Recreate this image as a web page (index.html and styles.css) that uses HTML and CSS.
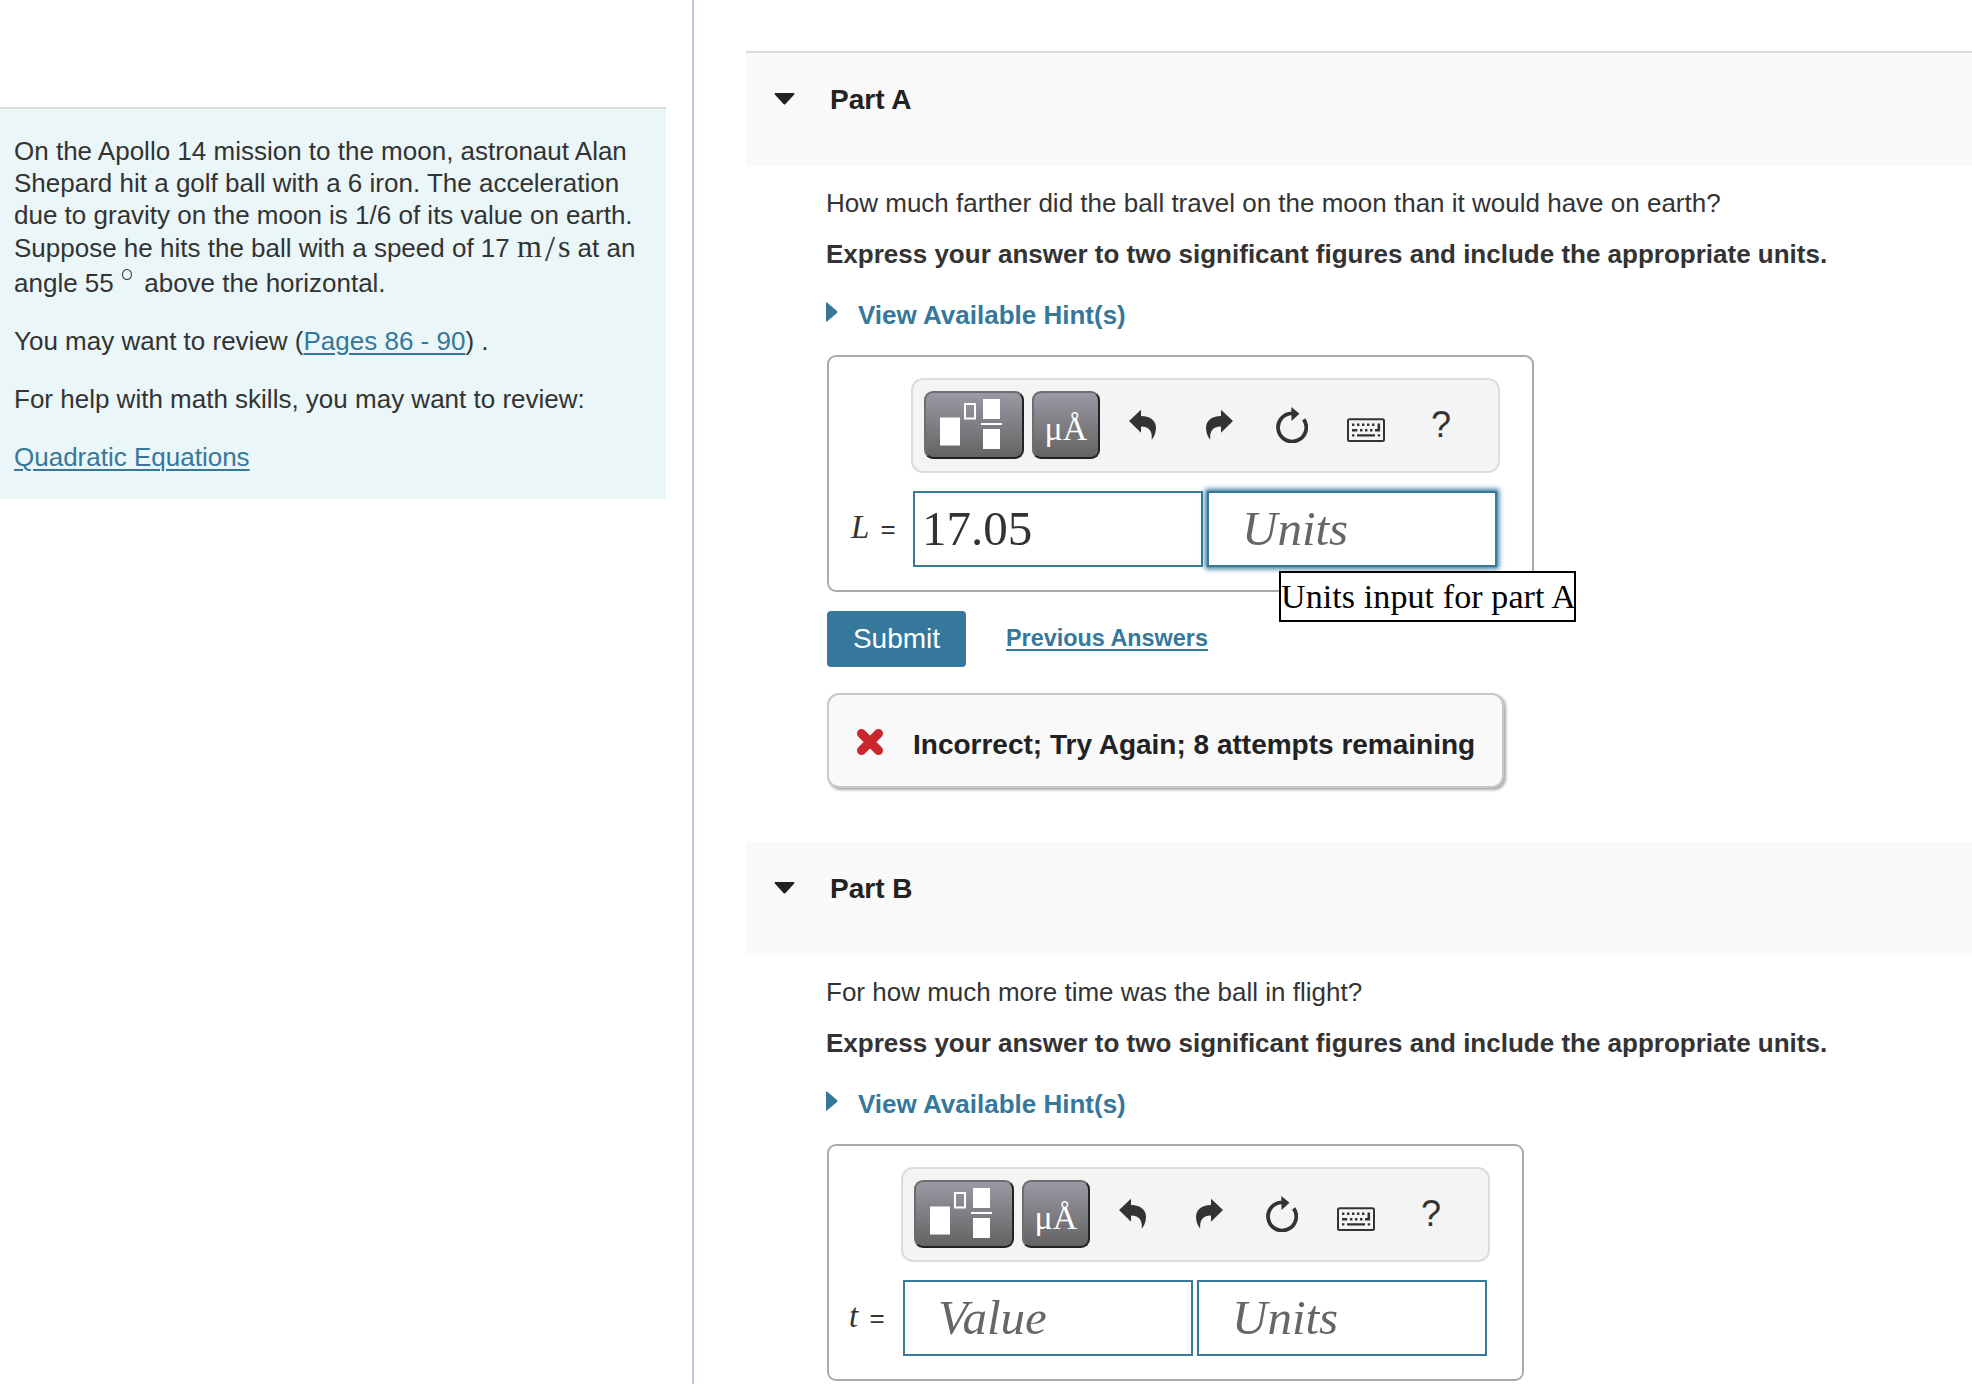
FILE: index.html
```
<!DOCTYPE html>
<html lang="en">

<head>
    <meta charset="UTF-8">
    <meta name="viewport" content="width=device-width, initial-scale=1.0">
    <title>Apollo 14 golf ball</title>
    <link rel="stylesheet" href="styles.css">
</head>

<body>
    <!-- shared toolbar icons -->
    <svg class="sprite">
        <symbol id="templates" viewBox="0 0 100 68">
            <path fill="#fff" d="M16 26.5h20v28H16zM59 8h17v20H59zM57 32h21v2H57zM59 38h17v20H59z" />
            <rect x="41" y="13" width="10" height="14.5" fill="none" stroke="#fff" stroke-width="2" />
        </symbol>
        <symbol id="undo" viewBox="0 0 27 36">
            <path d="M0 14L12 2.7V9C22 9 27 14 27 21C27 26 25 30 22.7 32.7C23.5 25 21 19.5 12 19.5V25.7Z" />
        </symbol>
        <symbol id="redo" viewBox="0 0 27 36">
            <path d="M27 14L15 2.7V9C5 9 0 14 0 21C0 26 2 30 4.3 32.7C3.5 25 6 19.5 15 19.5V25.7Z" />
        </symbol>
        <symbol id="reset" viewBox="0 0 32 36">
            <path d="M27.7 12.3A14.1 14.1 0 1 1 16 6.3" fill="none" stroke="#333" stroke-width="3.8" />
            <path d="M15.3 0L23.5 6.8L15.5 14Z" />
        </symbol>
        <symbol id="keyboard" viewBox="0 0 38 36">
            <rect x="1" y="12.2" width="36" height="21.8" rx="1.5" fill="none" stroke="#333" stroke-width="2" />
            <path d="M5 16.5h2.400v2.400H5zM10 16.5h2.400v2.400H10zM15 16.5h2.400v2.400H15zM20 16.5h2.400v2.400H20zM25 16.5h2.400v2.400H25zM30.500 16.5h2.600v8H28v-2.500H30.500zM5 22h5.300v2.500H5zM13 22h2.400v2.500H13zM18 22h2.400v2.500H18zM23 22h2.400v2.500H23zM5 27.200h2.400v2.400H5zM10 27.200h18v2.400H10zM30.700 27.200h2.400v2.400H30.700z" />
        </symbol>
    </svg>

    <!-- left: the problem -->
    <div class="side">
        <div class="problem">
            <p>
                <span class="line">On the Apollo 14 mission to the moon, astronaut Alan</span>
                <span class="line">Shepard hit a golf ball with a 6 iron. The acceleration</span>
                <span class="line">due to gravity on the moon is 1/6 of its value on earth.</span>
                <span class="line speed">Suppose he hits the ball with a speed of 17 <span class="math">m<span class="slash">/</span>s</span> at an</span>
                <span class="line angle">angle 55 <span class="deg"></span> above the horizontal.</span>
            </p>
            <p class="review">You may want to review (<a href="#">Pages 86 - 90</a>) .</p>
            <p>For help with math skills, you may want to review:</p>
            <p><a href="#">Quadratic Equations</a></p>
        </div>
    </div>

    <!-- right: the parts -->
    <div class="main">
        <div class="part first">
            <div class="head">
                <svg class="caret" width="21" height="12"><path d="M1 0H20Q21 .5 20 1.700L11.500 11Q10.500 12 9.500 11L1 1.700Q0 .5 1 0Z" /></svg>
                <h2>Part A</h2>
            </div>
            <div class="body">
                <p class="question">How much farther did the ball travel on the moon than it would have on earth?</p>
                <p class="express">Express your answer to two significant figures and include the appropriate units.</p>
                <a class="hints"><svg width="12" height="20"><path d="M0 1Q0 0 1 .5L11 9Q12 10 11 11L1 19.500Q0 20 0 19Z" /></svg>View Available Hint(s)</a>
                <div class="answer">
                    <div class="toolbar">
                        <div class="btn wide"><svg width="100" height="68"><use href="#templates" /></svg></div>
                        <div class="btn">μÅ</div>
                        <svg class="undo" width="27" height="36"><use href="#undo" /></svg>
                        <svg class="redo" width="27" height="36"><use href="#redo" /></svg>
                        <svg class="reset" width="32" height="36"><use href="#reset" /></svg>
                        <svg class="keyboard" width="38" height="36"><use href="#keyboard" /></svg>
                        <span class="help">?</span>
                    </div>
                    <div class="label"><i>L</i> =</div>
                    <div class="fields">
                        <div class="field">17.05</div>
                        <div class="field empty focus">Units<span class="tip">Units input for part A</span></div>
                    </div>
                </div>
                <div class="actions">
                    <button class="submit">Submit</button>
                    <a class="previous" href="#">Previous Answers</a>
                </div>
                <div class="feedback">
                    <svg width="28" height="28"><path d="M5.500 5.500L22.500 22.500M22.500 5.500L5.500 22.500" /></svg>
                    <span>Incorrect; Try Again; 8 attempts remaining</span>
                </div>
            </div>
        </div>

        <div class="part">
            <div class="head">
                <svg class="caret" width="21" height="12"><path d="M1 0H20Q21 .5 20 1.700L11.500 11Q10.500 12 9.500 11L1 1.700Q0 .5 1 0Z" /></svg>
                <h2>Part B</h2>
            </div>
            <div class="body">
                <p class="question">For how much more time was the ball in flight?</p>
                <p class="express">Express your answer to two significant figures and include the appropriate units.</p>
                <a class="hints"><svg width="12" height="20"><path d="M0 1Q0 0 1 .5L11 9Q12 10 11 11L1 19.500Q0 20 0 19Z" /></svg>View Available Hint(s)</a>
                <div class="answer narrow">
                    <div class="toolbar">
                        <div class="btn wide"><svg width="100" height="68"><use href="#templates" /></svg></div>
                        <div class="btn">μÅ</div>
                        <svg class="undo" width="27" height="36"><use href="#undo" /></svg>
                        <svg class="redo" width="27" height="36"><use href="#redo" /></svg>
                        <svg class="reset" width="32" height="36"><use href="#reset" /></svg>
                        <svg class="keyboard" width="38" height="36"><use href="#keyboard" /></svg>
                        <span class="help">?</span>
                    </div>
                    <div class="label"><i>t</i> =</div>
                    <div class="fields">
                        <div class="field empty">Value</div>
                        <div class="field empty">Units</div>
                    </div>
                </div>
            </div>
        </div>
    </div>
</body>

</html>
```

FILE: styles.css
```
* {
    margin: 0;
    padding: 0;
    box-sizing: border-box;
}

html {
    overflow: hidden;
}

body {
    display: flex;
    height: 1384px;
    overflow: hidden;
    background-color: #fff;
    color: #333;
    font: 26px/32px "Liberation Sans", Arial, sans-serif;
}

a {
    color: #35789b;
    text-underline-offset: 3px;
    text-decoration-thickness: 2px;
}

svg {
    display: block;
    flex: none;
    fill: #333;
}

.sprite {
    display: none;
}

/* left column */
.side {
    flex: none;
    width: 694px;
    height: 1384px;
    padding-top: 107px;
    border-right: 2px solid #bcc9dc;
}

.problem {
    width: 666px;
    height: 392px;
    padding: 26px 14px;
    border-top: 2px solid #dcdcdc;
    background-color: #eaf6f8;
    white-space: nowrap;
}

.problem p {
    margin-bottom: 26px;
}

.problem .review {
    margin-top: -2px;
}

.line {
    display: block;
    height: 32px;
}

.line.speed {
    height: 34px;
    line-height: 34px;
}

.line.angle {
    height: 36px;
    line-height: 36px;
}

.math {
    font-family: "Liberation Serif", serif;
    font-size: 32px;
    line-height: 1px;
}

.slash {
    display: inline-block;
    font-size: 36px;
    line-height: 1px;
    margin: 0 3px;
    vertical-align: -4px;
}

.deg {
    display: inline-block;
    width: 10px;
    height: 11px;
    margin: 0 5px 0 1px;
    border: 1px solid #333;
    border-radius: 50%;
    vertical-align: 12px;
}

/* right column */
.main {
    flex: 1;
    padding: 51px 0 0 52px;
}

.head {
    display: flex;
    height: 113px;
    padding-left: 28px;
    background-color: #f9f9f9;
}

.first .head {
    height: 115px;
    border-top: 2px solid #dcdcdc;
}

.caret {
    margin: 40px 35px 0 0;
    fill: #222;
}

.head h2 {
    margin-top: 31px;
    color: #222;
    font-size: 28px;
    line-height: 32px;
}

.body {
    padding: 21px 0 54px 81px;
}

.question {
    text-indent: -1px;
}

.express {
    margin-top: 19px;
    font-weight: bold;
    text-indent: -1px;
}

.hints {
    display: flex;
    margin: 29px 0 24px;
    font-weight: bold;
}

.hints svg {
    margin: 3px 20px 0 -1px;
    fill: #35789b;
}

.answer {
    display: grid;
    grid-template-columns: 82px 589px;
    grid-template-rows: 95px 76px;
    row-gap: 18px;
    width: 707px;
    height: 237px;
    padding-top: 21px;
    border: 2px solid #aaa;
    border-radius: 9px;
}

.answer.narrow {
    grid-template-columns: 72px 589px;
    width: 697px;
}

.toolbar {
    grid-column: 2;
    display: flex;
    align-items: center;
    padding: 0 0 2px 11px;
    border: 2px solid #dcdcdc;
    border-radius: 12px;
    background-color: #f4f4f4;
}

.btn {
    width: 68px;
    height: 68px;
    border: 2px solid;
    border-color: #6d6d70 #222 #222 #6d6d70;
    border-radius: 9px;
    background-image: linear-gradient(#9b99a3, #636363);
    color: #fff;
    font: 34px/72px "Liberation Serif", serif;
    text-align: center;
}

.btn.wide {
    width: 100px;
    margin-right: 8px;
}

.btn svg {
    margin: -2px;
}

.undo {
    margin-left: 29px;
}

.redo {
    margin-left: 50px;
}

.reset {
    margin-left: 43px;
}

.keyboard {
    margin-left: 39px;
}

.help {
    margin-left: 46px;
    font-size: 36px;
}

.label {
    padding: 20px 0 0 22px;
    white-space: nowrap;
}

.narrow .label {
    padding-left: 20px;
}

.label i {
    margin-right: 4px;
    font: italic 33px/32px "Liberation Serif", serif;
}

.fields {
    display: flex;
    gap: 4px;
    padding-left: 2px;
}

.field {
    position: relative;
    width: 290px;
    border: 2px solid #35789b;
    padding-left: 7px;
    font: 49px/72px "Liberation Serif", serif;
}

.field.empty {
    padding-left: 33px;
    color: #666;
    font-style: italic;
}

.field.focus {
    box-shadow: 0 0 5px 2px #35789b;
}

/* tooltip under the focused field */
.tip {
    position: absolute;
    left: 70px;
    top: 78px;
    width: 297px;
    height: 51px;
    border: 2px solid #000;
    background-color: #fff;
    color: #000;
    font: 34px/48px "Liberation Serif", serif;
    letter-spacing: 0.1px;
    white-space: nowrap;
}

.actions {
    display: flex;
    margin: 19px 0 26px;
}

.submit {
    width: 139px;
    height: 56px;
    border: 0;
    border-radius: 4px;
    background-color: #35789b;
    color: #fff;
    font: 28px/56px "Liberation Sans", Arial, sans-serif;
}

.previous {
    margin: 11px 0 0 40px;
    font-size: 23.4px;
    font-weight: bold;
}

.feedback {
    display: flex;
    align-items: center;
    width: 677px;
    height: 95px;
    padding: 2px 0 0 27px;
    border: 2px solid #c8c8c8;
    border-radius: 12px;
    background-color: #f9f9f9;
    box-shadow: 2px 2px 3px #aaa;
    color: #222;
    font-size: 28px;
    font-weight: bold;
    white-space: nowrap;
}

.feedback span {
    padding-top: 6px;
}

.feedback svg {
    margin-right: 29px;
    stroke: #c8282c;
    stroke-width: 9;
    stroke-linecap: round;
}
```
